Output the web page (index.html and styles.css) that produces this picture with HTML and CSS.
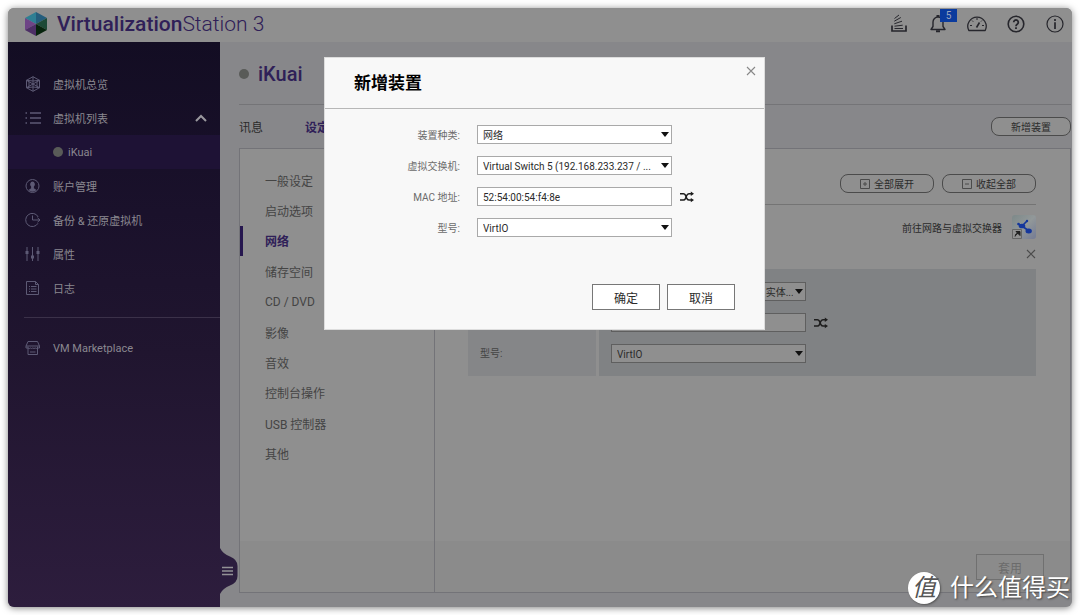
FILE: index.html
```html
<!DOCTYPE html>
<html lang="zh-CN">
<head>
<meta charset="utf-8">
<title>Virtualization Station 3</title>
<link rel="stylesheet" href="styles.css">
</head>
<body>
<svg class="defs" aria-hidden="true">
  <symbol id="shuffle" viewBox="0 0 14 12"><path d="M0 2.800h3.400q1.300 0 2 1.400l1.200 2.900q.7 2 2.300 2H12M0 9.100h3.400q1.300 0 2-1.500l1.200-2.800q.7-2 2.300-2H12" fill="none" stroke="currentColor" stroke-width="1.500"/><path d="M10.800.6L14 2.800l-3.200 2.200zM10.800 6.900L14 9.100l-3.200 2.200z" fill="currentColor"/></symbol>
  <symbol id="cross" viewBox="0 0 10 10"><path d="M1 1l8 8M9 1L1 9" fill="none" stroke="currentColor" stroke-width="1.100"/></symbol>
</svg>
<div class="window">
  <header class="topbar">
    <svg class="logo" viewBox="0 0 24 26" aria-hidden="true">
      <path d="M12 1L23 7l-11 6z" fill="#245d7c"/><path d="M12 1L1 7l11 6z" fill="#2e7f93"/>
      <path d="M1 7l11 6-11 6z" fill="#6e4486"/><path d="M1 19l11-6v12z" fill="#4d2f66"/>
      <path d="M23 7v12l-11-6z" fill="#1d4a37"/><path d="M23 19l-11 6V13z" fill="#07240d"/>
    </svg>
    <h1 class="brand"><b>Virtualization</b>Station 3</h1>
    <div class="tools">
      <button class="tool" aria-label="任务"><svg viewBox="0 0 18 20"><path d="M2 11.500V17h14v-5.500" fill="none" stroke="currentColor" stroke-width="1.700"/><path d="M4.500 14.500h8.500M4.500 12.200l8.200-1M4.300 9.800l7.700-2.600M4.300 7.200l6.500-3.700M4.500 4.500L9 1" fill="none" stroke="currentColor"/></svg></button>
      <button class="tool" aria-label="通知"><svg viewBox="0 0 18 20"><path d="M2 15.500h14l-2-3V8a5 5 0 0 0-10 0v4.500z" fill="none" stroke="currentColor" stroke-width="1.400" stroke-linejoin="round"/><path d="M7.500 2h3M7 17.300h4" stroke="currentColor" stroke-width="2"/></svg><span class="badge">5</span></button>
      <button class="tool" aria-label="资源监控"><svg viewBox="0 0 18 20"><path d="M.8 16.500A9.200 9.200 0 1 1 17.200 16.500z" fill="none" stroke="currentColor" stroke-width="1.300" stroke-linejoin="round"/><path d="M2 11.500h2M4 6.500l1.200 1.200M9 4v2M16 11.500h-2M14 6.500l-1 1" stroke="currentColor"/><path d="M8.500 13.500l3-5" stroke="currentColor" stroke-width="1.600"/></svg></button>
      <button class="tool" aria-label="帮助"><svg viewBox="0 0 18 20"><circle cx="9" cy="10" r="7.800" fill="none" stroke="currentColor" stroke-width="1.600"/><path d="M6.700 8.300a2.300 2.300 0 1 1 3.500 2q-1.200.8-1.200 2M9 13.300v1.800" fill="none" stroke="currentColor" stroke-width="1.800"/></svg></button>
      <button class="tool" aria-label="关于"><svg viewBox="0 0 18 20"><circle cx="9" cy="10" r="8" fill="none" stroke="currentColor" stroke-width="1.200"/><path d="M9 5v2M9 8.300v6.700" stroke="currentColor" stroke-width="1.700"/></svg></button>
    </div>
  </header>
  <div class="body">
    <nav class="sidebar" aria-label="主导航">
      <a class="side-item" href="#"><svg viewBox="0 0 16 16"><path d="M8 .7l6.500 3.600v7.400L8 15.300l-6.500-3.600V4.300zM8 .7v14.600M1.500 4.300l13 7.400M14.500 4.300l-13 7.400M1.500 4.300L8 5l6.500-.7M1.500 11.700L8 11l6.500.7M4 5.500v5M12 5.500v5"/></svg>虚拟机总览</a>
      <a class="side-item" href="#"><svg viewBox="0 0 16 16"><path d="M5 3h11M5 8h11M5 13h11M.5 3H2M.5 8H2M.5 13H2" stroke-width="1.400"/></svg>虚拟机列表<svg class="chevron" viewBox="0 0 12 8"><path d="M1 7l5-5 5 5"/></svg></a>
      <a class="side-item side-sub" href="#"><i class="dot"></i>iKuai</a>
      <a class="side-item" href="#"><svg viewBox="0 0 16 16"><circle cx="7.500" cy="8" r="6.500"/><path d="M7.500 3.500a2.500 2.800 0 0 0-1.400 5v1.700L3.500 12a5.600 5.600 0 0 0 8 0L8.900 10.200V8.500a2.500 2.800 0 0 0-1.400-5z" fill="currentColor" stroke="none"/></svg>账户管理</a>
      <a class="side-item" href="#"><svg viewBox="0 0 16 16"><path d="M13.200 5A6.600 6.600 0 1 0 13 11.300M7.500 3.500V8H15M12.500 5.800L15 8l-2.500 2.200"/></svg>备份 &amp; 还原虚拟机</a>
      <a class="side-item" href="#"><svg viewBox="0 0 16 16"><path d="M2 1v14M7.500 1v14M13 1v14"/><path d="M2 5v3M7.500 9.500v3M13 5v3" stroke-width="3"/></svg>属性</a>
      <a class="side-item" href="#"><svg viewBox="0 0 16 16"><path d="M1.500 1.500h9l3 3v10h-12zM10.500 1.500v3h3M4 6.500h1M6 6.500h5.500M4 9h1M6 9h5.500M4 11.500h1M6 11.500h5.500"/></svg>日志</a>
      <hr class="side-rule">
      <a class="side-item" href="#"><svg viewBox="0 0 16 16"><path d="M3 1.500h9.500L14.500 6v2h-2V6.500M1 6l2-4.500M1 6v2h2V6.500M3 8v6.500h9.500V8M3 8q1.200 1 2.400 0 1.200 1 2.400 0 1.200 1 2.400 0 1.200 1 2.300 0M1 6h13.500M5 12h5.500"/></svg>VM Marketplace</a>
      <button class="handle" aria-label="收起导航"><svg viewBox="0 0 18 46"><path d="M0 0q3 6 10 8.500Q17.500 11.500 17.500 18v10q0 6.500-7.500 9.500Q3 40 0 46z" fill="#2b1d3e"/><path d="M2 19.500h11M2 23h11M2 26.500h11" stroke="#939296" stroke-width="1.500"/></svg></button>
    </nav>
    <main class="main">
      <div class="title-row"><i class="dot"></i><h2 class="vm-name">iKuai</h2></div>
      <div class="tab-row">
        <a class="tab" href="#">讯息</a><a class="tab tab-on" href="#">设定</a>
        <button class="pill add">新增装置</button>
      </div>
      <section class="panel">
        <div class="columns">
          <nav class="settings" aria-label="设定">
            <a href="#">一般设定</a><a href="#">启动选项</a><a class="on" href="#">网络</a><a href="#">储存空间</a><a href="#">CD / DVD</a><a href="#">影像</a><a href="#">音效</a><a href="#">控制台操作</a><a href="#">USB 控制器</a><a href="#">其他</a>
          </nav>
          <div class="content">
            <div class="pill-row">
              <button class="pill"><svg viewBox="0 0 10 10"><path d="M.5.5h9v9h-9zM3 5h4M5 3v4"/></svg>全部展开</button>
              <button class="pill"><svg viewBox="0 0 10 10"><path d="M.5.5h9v9h-9zM3 5h4"/></svg>收起全部</button>
            </div>
            <a class="switch-link" href="#">前往网路与虚拟交换器
              <svg viewBox="0 0 24 24"><defs><linearGradient id="tile" x1="0" y1="0" x2="1" y2="1"><stop offset="0" stop-color="#7d8989"/><stop offset=".5" stop-color="#929899"/><stop offset="1" stop-color="#747b94"/></linearGradient></defs><rect width="24" height="24" rx="3" fill="url(#tile)"/><path d="M6 9l4 2 5-5M10 11l7 5" fill="none" stroke="#15379c" stroke-width="1.700"/><ellipse cx="10" cy="11" rx="3.300" ry="2.300" fill="#15379c"/><ellipse cx="16.700" cy="16" rx="3.200" ry="2.500" fill="#15379c"/><circle cx="6.500" cy="9" r="1.300" fill="#15379c"/><circle cx="15" cy="6" r="1.200" fill="#15379c"/><path d="M.5 14.500h9v9h-9z" fill="#929292" stroke="#666"/><path d="M3 21.500q0-3 3.500-3.500M4 16.500h4v4z" fill="#222" stroke="#222"/></svg>
            </a>
            <button class="remove" aria-label="移除"><svg><use href="#cross"/></svg></button>
            <div class="adapter">
              <div class="adapter-labels"><label for="a1">虚拟交换机:</label><label for="a2">MAC 地址:</label><label for="a3">型号:</label></div>
              <div class="adapter-fields">
                <div class="field"><span class="pick"><select id="a1"><option>Virtual Switch 1 (192.168.1.100 / 实体...</option></select></span></div>
                <div class="field"><input id="a2" type="text"><button class="random" aria-label="随机产生"><svg><use href="#shuffle"/></svg></button></div>
                <div class="field"><span class="pick"><select id="a3"><option>VirtIO</option></select></span></div>
              </div>
            </div>
          </div>
        </div>
        <footer class="panel-foot"><button class="apply" disabled>套用</button></footer>
      </section>
    </main>
  </div>
  <div class="dialog" role="dialog" aria-labelledby="dlg-title">
    <header class="dialog-head"><h3 id="dlg-title">新增装置</h3><button class="dialog-close" aria-label="关闭"><svg><use href="#cross"/></svg></button></header>
    <form class="dialog-form">
      <label for="d1">装置种类:</label><div class="field"><span class="pick"><select id="d1"><option>网络</option></select></span></div>
      <label for="d2">虚拟交换机:</label><div class="field"><span class="pick"><select id="d2"><option>Virtual Switch 5 (192.168.233.237 / ...</option></select></span></div>
      <label for="d3">MAC 地址:</label><div class="field"><input id="d3" type="text" value="52:54:00:54:f4:8e"><button type="button" class="random" aria-label="随机产生"><svg><use href="#shuffle"/></svg></button></div>
      <label for="d4">型号:</label><div class="field"><span class="pick"><select id="d4"><option>VirtIO</option></select></span></div>
    </form>
    <div class="dialog-actions"><button>确定</button><button>取消</button></div>
  </div>
  <div class="watermark"><span class="seal">值</span>什么值得买</div>
</div>
</body>
</html>
```

FILE: styles.css
```css
* { box-sizing: border-box; }
body {
  margin: 0;
  padding: 8px;
  background: #fff;
  font-family: Roboto, "Noto Sans CJK SC", sans-serif;
  font-size: 12px;
  color: #2b2b2b;
}
a { color: inherit; text-decoration: none; }
button, select, input { font: inherit; color: inherit; margin: 0; }
button { padding: 0; border: 0; background: none; cursor: pointer; }
svg { display: block; }
.defs { position: absolute; width: 0; height: 0; }
.window {
  position: relative;
  display: flex;
  flex-direction: column;
  min-height: calc(100vh - 16px);
  border-radius: 6px;
  background: #87878a;
  box-shadow: 0 1px 7px rgba(0, 0, 0, .5);
}

/* Top bar */
.topbar {
  display: flex;
  align-items: center;
  height: 34px;
  padding: 0 8px 2px 16px;
  background: #8f8f8f;
  border-radius: 6px 6px 0 0;
}
.logo { width: 24px; height: 26px; }
.brand {
  margin: 0 auto 0 9px;
  font-size: 21px;
  font-weight: 300;
  color: #2f2058;
}
.brand b { font-weight: 500; }
.tools { display: flex; gap: 21px; color: #26262c; }
.tool { position: relative; width: 18px; height: 20px; }
.tool svg { width: 100%; height: 100%; overflow: visible; }
.badge {
  position: absolute;
  top: -5px;
  left: 11px;
  width: 17px;
  height: 13px;
  background: #0b3b9d;
  color: #9ba5bd;
  font-size: 10px;
  line-height: 13px;
}

/* Sidebar */
.body { display: flex; flex: 1; }
.sidebar {
  position: relative;
  width: 212px;
  padding-top: 25px;
  background: linear-gradient(#130d23, #1a112b 30%, #20152f 55%, #2d1d3d);
  border-radius: 0 0 0 6px;
  font-size: 11px;
  color: #8a8890;
}
.side-item {
  display: flex;
  align-items: center;
  gap: 12px;
  height: 34px;
  padding: 0 13px 0 17px;
}
.side-item svg {
  width: 16px;
  height: 16px;
  fill: none;
  stroke: currentColor;
  color: #5d5a75;
}
.side-item .chevron {
  width: 12px;
  height: 8px;
  margin-left: auto;
  stroke-width: 2;
  color: #9a989e;
}
.side-sub { gap: 5px; padding-left: 45px; background: #1e1235; }
.dot { width: 10px; height: 10px; border-radius: 50%; background: #595b58; }
.side-rule { margin: 12px 0 13px 16px; border: 0; border-top: 1px solid #3b3149; }
.handle { position: absolute; left: 100%; bottom: 13px; width: 18px; height: 46px; }

/* Main area */
.main {
  display: flex;
  flex: 1;
  flex-direction: column;
  min-width: 0;
  padding: 0 1px 14px 19px;
}
.title-row {
  display: flex;
  align-items: center;
  gap: 9px;
  height: 63px;
  padding-top: 2px;
  border-bottom: 1px solid #747477;
}
.vm-name { margin: 0; font-size: 20px; font-weight: 500; color: #2f2058; }
.tab-row { display: flex; align-items: center; gap: 42px; height: 43px; }
.tab-on { color: #2f2058; font-weight: 700; }
.pill {
  display: flex;
  align-items: center;
  justify-content: center;
  gap: 4px;
  width: 94px;
  height: 19px;
  border: 1px solid #4b4b4b;
  border-radius: 8px;
  background: #8f8f8f;
  font-size: 10px;
}
.pill svg { width: 10px; height: 10px; fill: none; stroke: #4b4b4b; }
.add { width: 80px; margin-left: auto; }
.panel {
  display: flex;
  flex: 1;
  flex-direction: column;
  border: 1px solid #737378;
  background: #8f8f8f;
}
.columns { display: flex; flex: 1; }
.settings {
  display: grid;
  grid-auto-rows: 1fr;
  align-self: flex-start;
  width: 194px;
  height: 304px;
  margin-top: 16px;
  color: #444;
}
.settings a { display: flex; align-items: center; padding-left: 22px; border-left: 3px solid transparent; }
.settings .on { border-color: #26174f; color: #2f2058; font-weight: 700; }
.content { flex: 1; padding: 25px 34px 0 33px; border-left: 1px solid #737378; }
.pill-row {
  display: flex;
  justify-content: flex-end;
  gap: 8px;
  padding-bottom: 11px;
  border-bottom: 1px solid #747474;
}
.switch-link {
  display: flex;
  align-items: center;
  justify-content: flex-end;
  gap: 10px;
  margin-top: 10px;
  font-size: 10px;
}
.switch-link svg { width: 24px; height: 24px; }
.remove { display: block; margin: 10px 0 10px auto; color: #4b4b4b; }
.remove svg, .dialog-close svg { width: 10px; height: 10px; }
.adapter { display: grid; grid-template-columns: 128px 1fr; gap: 3px; font-size: 10px; }
.adapter-labels, .adapter-fields { display: grid; gap: 12px; padding: 13px 12px; background: #858688; }
.adapter-labels { color: #444; }
.adapter-labels label { line-height: 19px; }
.adapter-fields { background: #808284; }

/* Form controls */
.field { display: flex; align-items: center; gap: 8px; }
.pick { position: relative; }
.pick::after {
  content: "";
  position: absolute;
  top: 7px;
  right: 3px;
  border: 4px solid transparent;
  border-top: 5px solid #111;
  border-bottom: 0;
  pointer-events: none;
}
.field select, .field input {
  display: block;
  width: 195px;
  height: 19px;
  padding: 1px 12px 0 5px;
  border: 1px solid #5f5f5f;
  border-radius: 0;
  background: #8f8f8f;
  font-size: 10px;
  appearance: none;
}
.random svg { width: 14px; height: 12px; color: #1d1d1d; }
.panel-foot {
  display: flex;
  align-items: flex-start;
  height: 51px;
  padding: 13px 26px 0 194px;
  background: linear-gradient(#737378, #737378) 194px 0 / 1px 100% no-repeat #8b8b8b;
}
.apply {
  width: 68px;
  height: 26px;
  margin-left: auto;
  border: 1px solid #707070;
  color: #6b6b6b;
}

/* Dialog */
.dialog {
  position: absolute;
  top: 49px;
  left: calc(50% - 216px);
  width: 441px;
  padding-bottom: 19px;
  background: #f8f8f8;
  border: 1px solid #ddd;
}
.dialog-head {
  display: flex;
  align-items: flex-start;
  justify-content: space-between;
  height: 51px;
  padding: 8px 8px 0 29px;
  border-bottom: 1px solid #b7b7b7;
}
.dialog-head h3 { margin: 0; font-size: 17px; line-height: 34px; color: #000; }
.dialog-close { color: #888; }
.dialog-form {
  display: grid;
  grid-template-columns: 135px 1fr;
  align-items: center;
  gap: 12px 17px;
  padding: 16px 0 47px;
  font-size: 10px;
}
.dialog-form label { text-align: right; color: #6b6b6b; }
.dialog-form select, .dialog-form input { background: #fff; border-color: #a9a9a9; }
.dialog-actions { display: flex; justify-content: flex-end; gap: 7px; padding-right: 29px; }
.dialog-actions button { width: 68px; height: 26px; border: 1px solid #777; background: #fff; }

/* Watermark */
.watermark {
  position: absolute;
  right: 2px;
  bottom: 3px;
  display: flex;
  align-items: center;
  gap: 10px;
  font-size: 24px;
  line-height: 32px;
  color: #fff;
  text-shadow: 1px 1px 2px #444;
}
.seal {
  width: 32px;
  height: 32px;
  border-radius: 50%;
  background: #fff;
  color: #555;
  font-style: italic;
  text-align: center;
  text-shadow: none;
  box-shadow: 1px 1px 2px #555;
}
```
